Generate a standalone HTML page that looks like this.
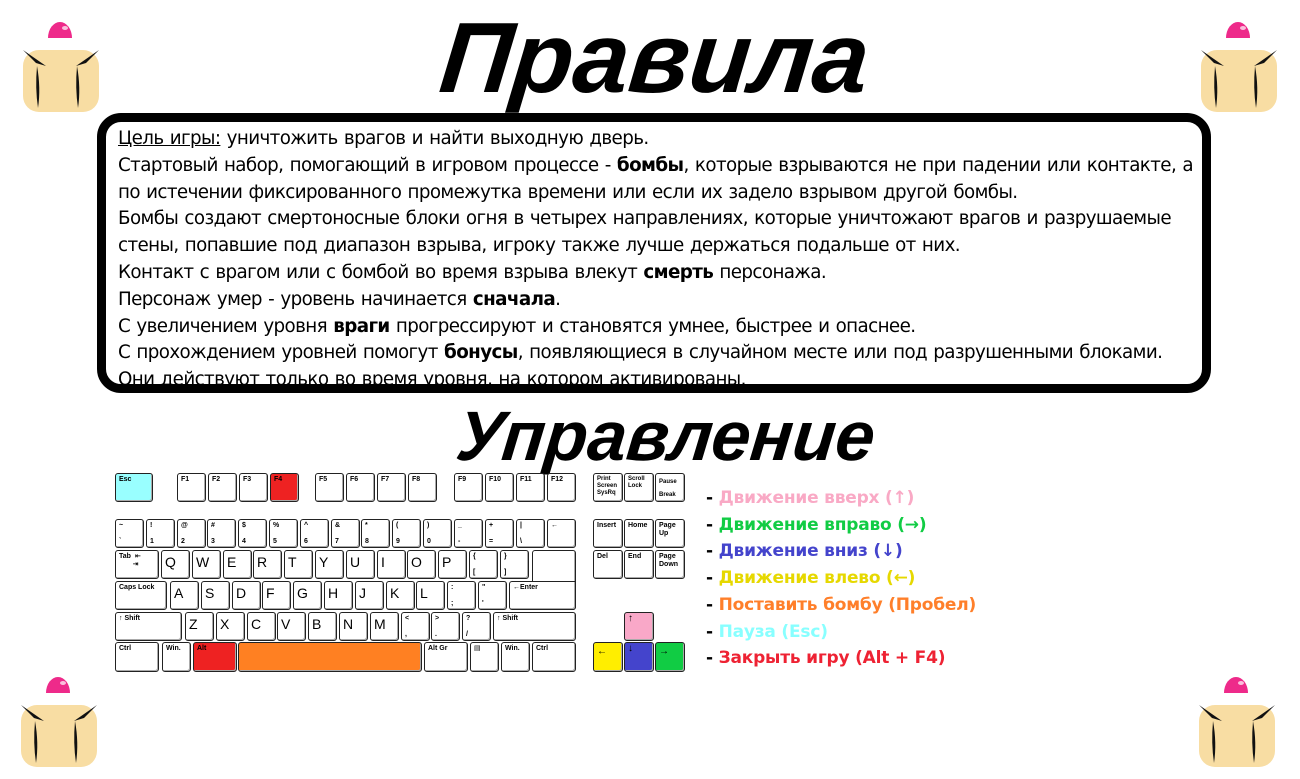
<!DOCTYPE html>
<html><head><meta charset="utf-8"><style>
*{margin:0;padding:0;box-sizing:border-box}
body{width:1300px;height:779px;background:#fff;position:relative;overflow:hidden;font-family:"Liberation Sans","DejaVu Sans",sans-serif}
.t1{position:absolute;left:0;width:1310px;top:0px;text-align:center;font:italic bold 100px "Liberation Sans",sans-serif;line-height:116px;transform:skewX(-6deg)}
.t2{position:absolute;left:0;width:1332px;top:394px;text-align:center;font:italic bold 70px "Liberation Sans",sans-serif;line-height:84px;transform:skewX(-6deg)}
.box{position:absolute;left:97px;top:113px;width:1114px;height:280px;border:9px solid #000;border-radius:24px;overflow:hidden;background:#fff}
.box div{position:absolute;left:12px;top:4px;width:1080px;font-size:18.3px;line-height:26.8px;color:#000;font-family:"DejaVu Sans",sans-serif;letter-spacing:-0.6px;word-spacing:1px}
.k{position:absolute;background:#fff;border:1px solid #222;border-radius:3px;box-shadow:inset -1px -1px 0 #aaa;font-size:7px;font-weight:bold;padding:2px 3px;line-height:8px;color:#000}
.k b{font-size:14px;font-weight:normal;display:block;margin-top:2px;line-height:14px}
.leg{position:absolute;left:706px;top:485px;font-weight:bold;font-size:17px;line-height:26.7px;font-family:"DejaVu Sans",sans-serif;letter-spacing:-0.2px}
</style></head><body>
<svg width="0" height="0" style="position:absolute"><defs><g id="m">
<path d="M26 28 A12 16 0 0 1 50 28 Z" fill="#ee2a8a"/><ellipse cx="43" cy="18" rx="3" ry="2" fill="#fff" opacity=".7"/>
<rect x="1" y="40" width="76" height="62" rx="16" fill="#f8dda3"/>
<path d="M1 40 L24 56 L14 53 Z M77 40 L54 56 L64 53 Z" fill="#111"/>
<path d="M15 56 Q13 78 16 98 Q19 78 15 56Z M55 56 Q53 78 56 98 Q59 78 55 56Z" fill="#111"/>
</g></defs></svg>
<svg style="position:absolute;left:22px;top:10px" width="80" height="104"><use href="#m"/></svg>
<svg style="position:absolute;left:1200px;top:10px" width="80" height="104"><use href="#m"/></svg>
<svg style="position:absolute;left:20px;top:665px" width="80" height="104"><use href="#m"/></svg>
<svg style="position:absolute;left:1198px;top:665px" width="80" height="104"><use href="#m"/></svg>

<div class="t1">Правила</div>
<div class="box"><div><u>Цель игры:</u> уничтожить врагов и найти выходную дверь.<br>Стартовый набор, помогающий в игровом процессе - <b>бомбы</b>, которые взрываются не при падении или контакте, а по истечении фиксированного промежутка времени или если их задело взрывом другой бомбы.<br>Бомбы создают смертоносные блоки огня в четырех направлениях, которые уничтожают врагов и разрушаемые стены, попавшие под диапазон взрыва, игроку также лучше держаться подальше от них.<br>Контакт с врагом или с бомбой во время взрыва влекут <b>смерть</b> персонажа.<br>Персонаж умер - уровень начинается <b>сначала</b>.<br>С увеличением уровня <b>враги</b> прогрессируют и становятся умнее, быстрее и опаснее.<br>С прохождением уровней помогут <b>бонусы</b>, появляющиеся в случайном месте или под разрушенными блоками.<br>Они действуют только во время уровня, на котором активированы.</div></div>
<div class="t2">Управление</div>

<!-- F row -->
<div class="k" style="left:115px;top:473px;width:38px;height:29px;background:#99ffff">Esc</div>
<div class="k" style="left:177px;top:473px;width:29px;height:29px">F1</div>
<div class="k" style="left:208px;top:473px;width:29px;height:29px">F2</div>
<div class="k" style="left:239px;top:473px;width:29px;height:29px">F3</div>
<div class="k" style="left:270px;top:473px;width:29px;height:29px;background:#ee2222">F4</div>
<div class="k" style="left:315px;top:473px;width:29px;height:29px">F5</div>
<div class="k" style="left:346px;top:473px;width:29px;height:29px">F6</div>
<div class="k" style="left:377px;top:473px;width:29px;height:29px">F7</div>
<div class="k" style="left:408px;top:473px;width:29px;height:29px">F8</div>
<div class="k" style="left:454px;top:473px;width:29px;height:29px">F9</div>
<div class="k" style="left:485px;top:473px;width:29px;height:29px">F10</div>
<div class="k" style="left:516px;top:473px;width:29px;height:29px">F11</div>
<div class="k" style="left:547px;top:473px;width:29px;height:29px">F12</div>
<div class="k" style="left:593px;top:473px;width:30px;height:29px;font-size:6px;line-height:7px">Print Screen SysRq</div>
<div class="k" style="left:624px;top:473px;width:30px;height:29px;font-size:6px;line-height:7px">Scroll Lock</div>
<div class="k" style="left:655px;top:473px;width:30px;height:29px;font-size:6px;line-height:13px">Pause<br>Break</div>
<!-- number row -->
<div class="k" style="left:115px;top:519px;width:29px;height:29px">~<br><br>`</div>
<div class="k" style="left:146px;top:519px;width:29px;height:29px">!<br><br>1</div>
<div class="k" style="left:177px;top:519px;width:29px;height:29px">@<br><br>2</div>
<div class="k" style="left:207px;top:519px;width:29px;height:29px">#<br><br>3</div>
<div class="k" style="left:238px;top:519px;width:29px;height:29px">$<br><br>4</div>
<div class="k" style="left:269px;top:519px;width:29px;height:29px">%<br><br>5</div>
<div class="k" style="left:300px;top:519px;width:29px;height:29px">^<br><br>6</div>
<div class="k" style="left:331px;top:519px;width:29px;height:29px">&amp;<br><br>7</div>
<div class="k" style="left:361px;top:519px;width:29px;height:29px">*<br><br>8</div>
<div class="k" style="left:392px;top:519px;width:29px;height:29px">(<br><br>9</div>
<div class="k" style="left:423px;top:519px;width:29px;height:29px">)<br><br>0</div>
<div class="k" style="left:454px;top:519px;width:29px;height:29px">_<br><br>-</div>
<div class="k" style="left:485px;top:519px;width:29px;height:29px">+<br><br>=</div>
<div class="k" style="left:516px;top:519px;width:29px;height:29px">|<br><br>\</div>
<div class="k" style="left:547px;top:519px;width:29px;height:29px">←</div>
<div class="k" style="left:593px;top:519px;width:30px;height:29px">Insert</div>
<div class="k" style="left:624px;top:519px;width:30px;height:29px">Home</div>
<div class="k" style="left:655px;top:519px;width:30px;height:29px">Page Up</div>
<!-- Q row -->
<div class="k" style="left:115px;top:550px;width:44px;height:29px">Tab &nbsp;⇤<br>&nbsp;&nbsp;&nbsp;&nbsp;&nbsp;&nbsp;&nbsp;⇥</div>
<div class="k" style="left:161px;top:550px;width:29px;height:29px"><b>Q</b></div>
<div class="k" style="left:192px;top:550px;width:29px;height:29px"><b>W</b></div>
<div class="k" style="left:223px;top:550px;width:29px;height:29px"><b>E</b></div>
<div class="k" style="left:253px;top:550px;width:29px;height:29px"><b>R</b></div>
<div class="k" style="left:284px;top:550px;width:29px;height:29px"><b>T</b></div>
<div class="k" style="left:315px;top:550px;width:29px;height:29px"><b>Y</b></div>
<div class="k" style="left:346px;top:550px;width:29px;height:29px"><b>U</b></div>
<div class="k" style="left:377px;top:550px;width:29px;height:29px"><b>I</b></div>
<div class="k" style="left:407px;top:550px;width:29px;height:29px"><b>O</b></div>
<div class="k" style="left:438px;top:550px;width:29px;height:29px"><b>P</b></div>
<div class="k" style="left:469px;top:550px;width:29px;height:29px">{<br><br>[</div>
<div class="k" style="left:500px;top:550px;width:29px;height:29px">}<br><br>]</div>
<div class="k" style="left:532px;top:550px;width:44px;height:60px"></div>
<div class="k" style="left:593px;top:550px;width:30px;height:29px">Del</div>
<div class="k" style="left:624px;top:550px;width:30px;height:29px">End</div>
<div class="k" style="left:655px;top:550px;width:30px;height:29px">Page Down</div>
<!-- A row -->
<div class="k" style="left:115px;top:581px;width:52px;height:29px">Caps Lock</div>
<div class="k" style="left:170px;top:581px;width:29px;height:29px"><b>A</b></div>
<div class="k" style="left:201px;top:581px;width:29px;height:29px"><b>S</b></div>
<div class="k" style="left:232px;top:581px;width:29px;height:29px"><b>D</b></div>
<div class="k" style="left:262px;top:581px;width:29px;height:29px"><b>F</b></div>
<div class="k" style="left:293px;top:581px;width:29px;height:29px"><b>G</b></div>
<div class="k" style="left:324px;top:581px;width:29px;height:29px"><b>H</b></div>
<div class="k" style="left:355px;top:581px;width:29px;height:29px"><b>J</b></div>
<div class="k" style="left:386px;top:581px;width:29px;height:29px"><b>K</b></div>
<div class="k" style="left:416px;top:581px;width:29px;height:29px"><b>L</b></div>
<div class="k" style="left:447px;top:581px;width:29px;height:29px">:<br><br>;</div>
<div class="k" style="left:478px;top:581px;width:29px;height:29px">"<br><br>'</div>
<div class="k" style="left:509px;top:581px;width:67px;height:29px;border-top-right-radius:0">←Enter</div>
<!-- Z row -->
<div class="k" style="left:115px;top:612px;width:67px;height:29px">↑ Shift</div>
<div class="k" style="left:185px;top:612px;width:29px;height:29px"><b>Z</b></div>
<div class="k" style="left:216px;top:612px;width:29px;height:29px"><b>X</b></div>
<div class="k" style="left:247px;top:612px;width:29px;height:29px"><b>C</b></div>
<div class="k" style="left:277px;top:612px;width:29px;height:29px"><b>V</b></div>
<div class="k" style="left:308px;top:612px;width:29px;height:29px"><b>B</b></div>
<div class="k" style="left:339px;top:612px;width:29px;height:29px"><b>N</b></div>
<div class="k" style="left:370px;top:612px;width:29px;height:29px"><b>M</b></div>
<div class="k" style="left:401px;top:612px;width:29px;height:29px">&lt;<br><br>,</div>
<div class="k" style="left:431px;top:612px;width:29px;height:29px">&gt;<br><br>.</div>
<div class="k" style="left:462px;top:612px;width:29px;height:29px">?<br><br>/</div>
<div class="k" style="left:493px;top:612px;width:83px;height:29px">↑ Shift</div>
<div class="k" style="left:624px;top:612px;width:30px;height:29px;background:#f9a8c8;font-size:10px">↑</div>
<!-- bottom -->
<div class="k" style="left:115px;top:642px;width:44px;height:30px">Ctrl</div>
<div class="k" style="left:162px;top:642px;width:29px;height:30px">Win.</div>
<div class="k" style="left:193px;top:642px;width:44px;height:30px;background:#ee2222">Alt</div>
<div class="k" style="left:238px;top:642px;width:184px;height:30px;background:#ff8022"></div>
<div class="k" style="left:424px;top:642px;width:44px;height:30px">Alt Gr</div>
<div class="k" style="left:470px;top:642px;width:29px;height:30px">▤</div>
<div class="k" style="left:501px;top:642px;width:29px;height:30px">Win.</div>
<div class="k" style="left:532px;top:642px;width:44px;height:30px">Ctrl</div>
<div class="k" style="left:593px;top:642px;width:30px;height:30px;background:#ffee00;font-size:10px;padding-top:5px">←</div>
<div class="k" style="left:624px;top:642px;width:30px;height:30px;background:#4444cc;font-size:10px">↓</div>
<div class="k" style="left:655px;top:642px;width:30px;height:30px;background:#11cc44;font-size:10px;padding-top:5px">→</div>

<div class="leg">
<div>- <span style="color:#f9a9c5">Движение вверх (↑)</span></div>
<div>- <span style="color:#11cc44">Движение вправо (→)</span></div>
<div>- <span style="color:#4444cc">Движение вниз (↓)</span></div>
<div>- <span style="color:#e6d800">Движение влево (←)</span></div>
<div>- <span style="color:#ff7f2a">Поставить бомбу (Пробел)</span></div>
<div>- <span style="color:#88ffff">Пауза (Esc)</span></div>
<div>- <span style="color:#ee2233">Закрыть игру (Alt + F4)</span></div>
</div>
</body></html>
